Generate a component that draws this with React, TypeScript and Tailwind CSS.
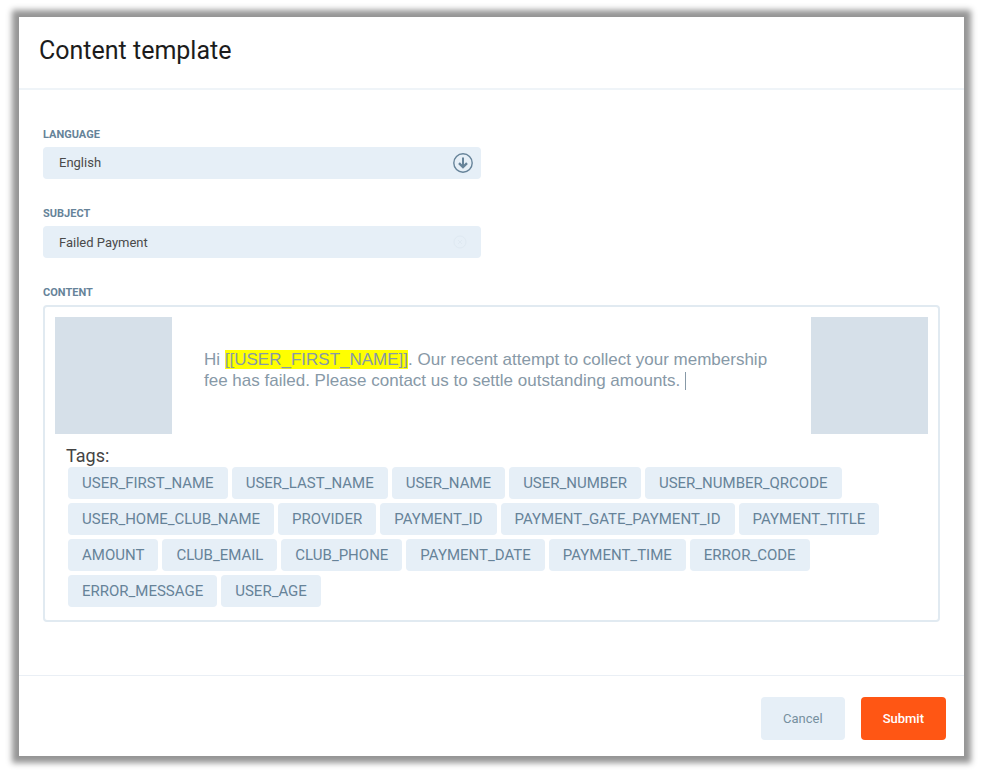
import { useState } from "react";

const TAGS = [
  "USER_FIRST_NAME",
  "USER_LAST_NAME",
  "USER_NAME",
  "USER_NUMBER",
  "USER_NUMBER_QRCODE",
  "USER_HOME_CLUB_NAME",
  "PROVIDER",
  "PAYMENT_ID",
  "PAYMENT_GATE_PAYMENT_ID",
  "PAYMENT_TITLE",
  "AMOUNT",
  "CLUB_EMAIL",
  "CLUB_PHONE",
  "PAYMENT_DATE",
  "PAYMENT_TIME",
  "ERROR_CODE",
  "ERROR_MESSAGE",
  "USER_AGE",
];

const LABEL = "block text-[11px] leading-4 font-bold uppercase text-[#668399]";
const FIELD =
  "block h-8 w-full appearance-none rounded bg-[#e6eff7] pl-4 pr-10 text-[13px] text-[#4a4a4a] outline-none";

function ArrowDownIcon() {
  return (
    <svg viewBox="0 0 20 20" className="h-5 w-5" fill="none" stroke="#668399">
      <circle cx="10" cy="10" r="9.2" strokeWidth="1.4" />
      <path d="M10 4.6v9" strokeWidth="2" />
      <path d="M6 10.2l4 3.9 4-3.9" strokeWidth="2.4" />
    </svg>
  );
}

function ClearIcon() {
  return (
    <svg viewBox="0 0 14 14" className="h-[14px] w-[14px]" fill="none" stroke="#dfe9f2">
      <circle cx="7" cy="7" r="6" />
      <path d="M5 5l4 4M9 5l-4 4" />
    </svg>
  );
}

function Editor() {
  return (
    <div className="flex items-start justify-between">
      <div className="h-[117px] w-[117px] shrink-0 bg-[#d6e0e9]" />
      <div
        id="content"
        role="textbox"
        aria-multiline="true"
        aria-labelledby="content-label"
        contentEditable
        suppressContentEditableWarning
        className="flex-1 px-8 pt-8 font-['Liberation_Sans',Arial,sans-serif] text-[17px] leading-[21px] text-[#8799a7] outline-none"
      >
        Hi <mark className="bg-[#ffff00] text-[#8799a7]">[[USER_FIRST_NAME]]</mark>. Our recent
        attempt to collect your membership fee has failed. Please contact us to settle outstanding
        amounts. <span className="inline-block h-[18px] w-px bg-[#8799a7] align-text-bottom" />
      </div>
      <div className="h-[117px] w-[117px] shrink-0 bg-[#d6e0e9]" />
    </div>
  );
}

export default function App() {
  const [subject, setSubject] = useState("Failed Payment");

  return (
    <div className="min-h-screen bg-white px-[19px] py-[17px] font-[Roboto,sans-serif]">
      <form
        className="bg-white shadow-[0_0_6px_7px_#959595]"
        onSubmit={(e) => e.preventDefault()}
      >
        {/* Header */}
        <header className="border-b-2 border-[#eff4f8] px-5 pt-[18px] pb-[22px]">
          <h1 className="text-[25px] leading-[31px] text-[#1c1c1c]">Content template</h1>
        </header>

        {/* Fields */}
        <div className="px-6 pt-[37px] pb-[53px]">
          <div className="w-1/2 max-w-[438px]">
            <label htmlFor="language" className={LABEL}>
              Language
            </label>
            <div className="relative mt-1">
              <select id="language" className={FIELD}>
                <option>English</option>
              </select>
              <div className="pointer-events-none absolute inset-y-0 right-2 flex items-center">
                <ArrowDownIcon />
              </div>
            </div>

            <label htmlFor="subject" className={`${LABEL} mt-[27px]`}>
              Subject
            </label>
            <div className="relative mt-1">
              <input
                id="subject"
                type="text"
                value={subject}
                onChange={(e) => setSubject(e.target.value)}
                className={FIELD}
              />
              <div className="pointer-events-none absolute inset-y-0 right-[14px] flex items-center">
                <ClearIcon />
              </div>
            </div>
          </div>

          <span id="content-label" className={`${LABEL} mt-[27px]`}>
            Content
          </span>
          <div className="mt-1 rounded border-2 border-[#e1eaf1] p-[10px] pb-[13px]">
            <Editor />
            <p className="mt-[11px] pl-[11px] text-[18px] leading-[22px] text-[#444]">Tags:</p>
            <div className="flex flex-wrap gap-1 px-[13px]">
              {TAGS.map((tag) => (
                <button
                  key={tag}
                  type="button"
                  className="h-8 rounded bg-[#e6eff7] px-[14px] text-[15px] text-[#668399]"
                >
                  {tag}
                </button>
              ))}
            </div>
          </div>
        </div>

        {/* Footer */}
        <footer className="flex justify-end gap-4 border-t border-[#eaeff5] px-[18px] pt-[21px] pb-4">
          <button
            type="button"
            className="h-[43px] rounded bg-[#e6eff7] px-[22px] text-[13px] text-[#76909f]"
          >
            Cancel
          </button>
          <button
            type="submit"
            className="h-[43px] rounded bg-[#ff5614] px-[22px] text-[13px] font-medium text-white"
          >
            Submit
          </button>
        </footer>
      </form>
    </div>
  );
}
